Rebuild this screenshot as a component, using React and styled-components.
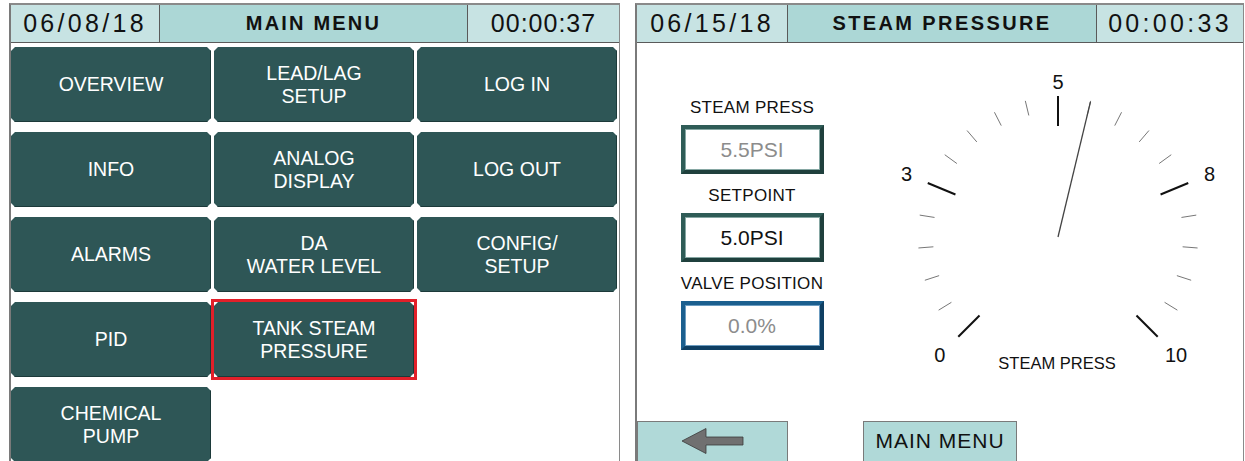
import React from "react";
import styled, { createGlobalStyle } from "styled-components";

const GlobalStyle = createGlobalStyle`
  html, body { margin: 0; padding: 0; background: #ffffff; }
  body { font-family: "Liberation Sans", Arial, sans-serif; }
  * { box-sizing: border-box; }
`;

const Screen = styled.div`
  display: flex;
  gap: 15px;
  width: 1245px;
  height: 461px;
  padding: 3px 0 0 9px;
  overflow: hidden;
`;

const Panel = styled.section`
  display: flex;
  flex-direction: column;
  width: ${(p) => p.$w}px;
  height: 470px;
  border-top: 2px solid #8a8a8a;
  border-left: 2px solid #7a7a7a;
  border-right: 1px solid #8a8a8a;
`;

const Header = styled.header`
  display: flex;
  height: 38px;
  border-bottom: 1px solid #5a5a5a;
  flex: none;
`;

const HeaderCell = styled.div`
  flex: ${(p) => (p.$w ? "none" : "1")};
  width: ${(p) => (p.$w ? `${p.$w}px` : "auto")};
  background: ${(p) => (p.$mid ? "#acd7d6" : "#c7e3e3")};
  border-right: ${(p) => (p.$last ? "none" : "1px solid #5a5a5a")};
  display: flex;
  align-items: center;
  justify-content: center;
  color: #111;
  font-size: ${(p) => (p.$bold ? "20px" : "25px")};
  font-weight: ${(p) => (p.$bold ? 700 : 400)};
  letter-spacing: ${(p) => p.$ls}px;
  white-space: nowrap;
`;

const MenuGrid = styled.div`
  display: grid;
  grid-template-columns: repeat(3, 200px);
  grid-auto-rows: 75px;
  column-gap: 3px;
  row-gap: 10px;
  margin-top: 4px;
`;

const Frame = styled.div`
  display: flex;
  outline: ${(p) => (p.$selected ? "3px solid #e2202a" : "none")};
`;

const MenuButton = styled.button`
  flex: 1;
  border: none;
  margin: 0;
  padding: 0;
  background: #2e5656;
  color: #ffffff;
  font-family: "Liberation Sans", Arial, sans-serif;
  font-size: 19.5px;
  line-height: 23px;
  text-align: center;
  white-space: pre-line;
  box-shadow: inset -1px -1px 0 #1c3a3a;
  clip-path: polygon(
    4px 0, calc(100% - 4px) 0, 100% 4px, 100% calc(100% - 4px),
    calc(100% - 4px) 100%, 4px 100%, 0 calc(100% - 4px), 0 4px
  );
`;

const Body = styled.div`
  display: flex;
  height: 378px;
  flex: none;
`;

const ValueColumn = styled.div`
  display: flex;
  flex-direction: column;
  align-items: center;
  width: 152px;
  margin-left: 39px;
  padding-top: 55px;
  gap: 12px;
`;

const Field = styled.div`
  display: flex;
  flex-direction: column;
  align-items: center;
  gap: 7px;
`;

const FieldLabel = styled.div`
  font-size: 17px;
  line-height: 20px;
  color: #111;
  white-space: nowrap;
  letter-spacing: 0.3px;
`;

const ValueBox = styled.div`
  width: 143px;
  height: 49px;
  display: flex;
  align-items: center;
  justify-content: center;
  background: #ffffff;
  border: 4px solid ${(p) => (p.$blue ? "#1b5f8f" : "#2f5c57")};
  border-right-color: ${(p) => (p.$blue ? "#0f3f63" : "#1f403d")};
  border-bottom-color: ${(p) => (p.$blue ? "#0f3f63" : "#1f403d")};
  box-shadow: inset 0 0 0 1px ${(p) => (p.$blue ? "#6c9cc0" : "#86a7a3")};
  font-size: 21px;
  color: ${(p) => (p.$dim ? "#8c8c8c" : "#111")};
`;

const GaugeSvg = styled.svg`
  display: block;
  margin-left: 52px;
  margin-top: 17px;
  flex: none;
`;

const Footer = styled.div`
  display: flex;
  gap: 75px;
  flex: 1;
`;

const NavButton = styled.button`
  width: ${(p) => p.$w}px;
  height: 45px;
  margin: 0;
  padding: 0 0 6px;
  border: 1px solid #7a7a7a;
  background: #b0d9d8;
  color: #111;
  font-family: "Liberation Sans", Arial, sans-serif;
  font-size: 21px;
  letter-spacing: 1px;
  display: flex;
  align-items: center;
  justify-content: center;
`;

const menu = [
  "OVERVIEW",
  "LEAD/LAG\nSETUP",
  "LOG IN",
  "INFO",
  "ANALOG\nDISPLAY",
  "LOG OUT",
  "ALARMS",
  "DA\nWATER LEVEL",
  "CONFIG/\nSETUP",
  "PID",
  "TANK STEAM\nPRESSURE",
  null,
  "CHEMICAL\nPUMP",
];

function Gauge() {
  const cx = 178;
  const cy = 177;
  const ticks = [];
  for (let i = 0; i <= 20; i++) {
    const th = ((225 - i * 13.5) * Math.PI) / 180;
    const major = i % 5 === 0;
    const r1 = major ? 111 : 125;
    const r2 = major ? 141 : 140;
    ticks.push(
      <line
        key={i}
        x1={cx + r1 * Math.cos(th)}
        y1={cy - r1 * Math.sin(th)}
        x2={cx + r2 * Math.cos(th)}
        y2={cy - r2 * Math.sin(th)}
        stroke={major ? "#111" : "#777"}
        strokeWidth={major ? 2 : 1}
      />
    );
  }
  const labels = [
    { t: "0", a: 225, r: 167 },
    { t: "3", a: 157.5, r: 164 },
    { t: "5", a: 90, r: 155 },
    { t: "8", a: 22.5, r: 164 },
    { t: "10", a: -45, r: 167 },
  ];
  const value = 5.5;
  const na = ((90 - (value / 10 - 0.5) * 270) * Math.PI) / 180;
  return (
    <GaugeSvg width="360" height="320" viewBox="0 0 360 320">
      {ticks}
      {labels.map((l) => {
        const th = (l.a * Math.PI) / 180;
        return (
          <text
            key={l.t}
            x={cx + l.r * Math.cos(th)}
            y={cy - l.r * Math.sin(th)}
            textAnchor="middle"
            dominantBaseline="central"
            fontSize="20"
            fontFamily="Liberation Sans, Arial, sans-serif"
            fill="#111"
          >
            {l.t}
          </text>
        );
      })}
      <line
        x1={cx}
        y1={cy}
        x2={cx + 139 * Math.cos(na)}
        y2={cy - 139 * Math.sin(na)}
        stroke="#444"
        strokeWidth="1.3"
      />
      <text
        x={177}
        y={303}
        textAnchor="middle"
        dominantBaseline="central"
        fontSize="16.5"
        fontFamily="Liberation Sans, Arial, sans-serif"
        fill="#111"
      >
        STEAM PRESS
      </text>
    </GaugeSvg>
  );
}

function BackArrow() {
  return (
    <svg width="64" height="28" viewBox="0 0 64 28">
      <polygon
        points="1,14 25,1.5 25,10 62,10 62,18 25,18 25,26.5"
        fill="#707070"
        stroke="#3a3a3a"
        strokeWidth="0.8"
      />
    </svg>
  );
}

export default function App() {
  return (
    <>
      <GlobalStyle />
      <Screen>
        <Panel $w={611}>
          <Header>
            <HeaderCell $w={149} $ls={3.3}>06/08/18</HeaderCell>
            <HeaderCell $w={308} $mid $bold $ls={2.2}>MAIN MENU</HeaderCell>
            <HeaderCell $last $ls={1}>00:00:37</HeaderCell>
          </Header>
          <MenuGrid>
            {menu.map((m, i) =>
              m ? (
                <Frame key={i} $selected={m.startsWith("TANK")}>
                  <MenuButton>{m}</MenuButton>
                </Frame>
              ) : (
                <div key={i} />
              )
            )}
          </MenuGrid>
        </Panel>
        <Panel $w={609}>
          <Header>
            <HeaderCell $w={151} $ls={3.3}>06/15/18</HeaderCell>
            <HeaderCell $w={309} $mid $bold $ls={2.4}>STEAM PRESSURE</HeaderCell>
            <HeaderCell $last $ls={3.3}>00:00:33</HeaderCell>
          </Header>
          <Body>
            <ValueColumn>
              <Field>
                <FieldLabel>STEAM PRESS</FieldLabel>
                <ValueBox $dim>5.5PSI</ValueBox>
              </Field>
              <Field>
                <FieldLabel>SETPOINT</FieldLabel>
                <ValueBox>5.0PSI</ValueBox>
              </Field>
              <Field>
                <FieldLabel>VALVE POSITION</FieldLabel>
                <ValueBox $blue $dim>0.0%</ValueBox>
              </Field>
            </ValueColumn>
            <Gauge />
          </Body>
          <Footer>
            <NavButton $w={151} aria-label="Back">
              <BackArrow />
            </NavButton>
            <NavButton $w={154}>MAIN MENU</NavButton>
          </Footer>
        </Panel>
      </Screen>
    </>
  );
}
